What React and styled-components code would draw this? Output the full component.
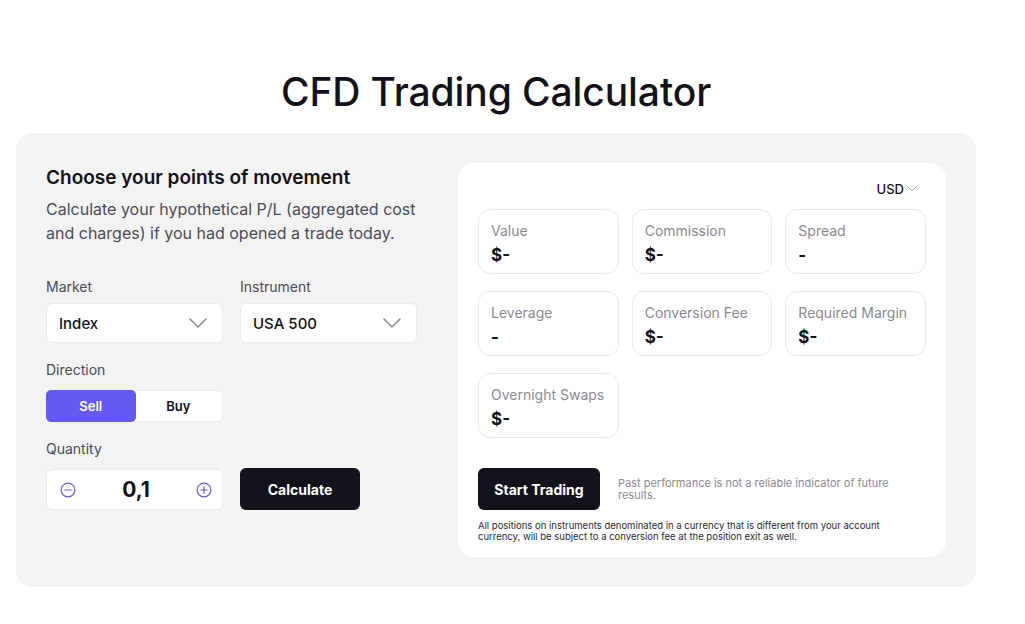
import React from 'react';
import styled, { createGlobalStyle } from 'styled-components';

const GlobalStyle = createGlobalStyle`
  body {
    margin: 0;
    background: #fff;
    font-family: Inter, "Liberation Sans", sans-serif;
    color: #12121a;
  }
`;

const Page = styled.div`
  padding: 70px 49px 0 16px;
  display: flex;
  flex-direction: column;
`;

const Title = styled.h1`
  margin: 0 0 19px;
  text-align: center;
  font-size: 39px;
  font-weight: 500;
  line-height: 44px;
  letter-spacing: -0.1px;
`;

const Card = styled.div`
  background: #f3f3f4;
  border-radius: 16px;
  padding: 30px;
  display: flex;
  gap: 40px;
  height: 454px;
  box-sizing: border-box;
`;

const LeftCol = styled.div`
  width: 372px;
  display: flex;
  flex-direction: column;
`;

const Heading = styled.h2`
  margin: 2px 0 6px;
  font-size: 19px;
  font-weight: 600;
  line-height: 26px;
`;

const Desc = styled.p`
  margin: 0 0 33px;
  font-size: 16px;
  line-height: 24px;
  color: #4b4b57;
`;

const Row = styled.div`
  display: flex;
  gap: 17px;
  align-items: ${p => p.$align || 'stretch'};
`;

const Field = styled.div`
  display: flex;
  flex-direction: column;
  gap: ${p => p.$gap || 7}px;
  width: 177px;
  margin-bottom: ${p => p.$mb || 0}px;
`;

const Label = styled.div`
  font-size: 14px;
  line-height: 18px;
  color: #4b4b57;
`;

const Select = styled.div`
  height: 40px;
  box-sizing: border-box;
  background: #fff;
  border: 1px solid #e8e8f0;
  border-radius: 6px;
  display: flex;
  align-items: center;
  justify-content: space-between;
  padding: 0 14px 0 12px;
  font-size: 15px;
  font-weight: 500;
`;

const Toggle = styled.div`
  height: 32px;
  box-sizing: border-box;
  background: #fff;
  border: 1px solid #e8e8f0;
  border-radius: 6px;
  display: flex;
`;

const ToggleBtn = styled.div`
  flex: 1;
  display: flex;
  align-items: center;
  justify-content: center;
  border-radius: 5px;
  font-size: 13px;
  font-weight: 600;
  background: ${p => (p.$active ? '#6459f3' : 'transparent')};
  color: ${p => (p.$active ? '#fff' : '#12121a')};
  margin: -1px;
`;

const Stepper = styled.div`
  height: 41px;
  box-sizing: border-box;
  background: #fff;
  border: 1px solid #e8e8f0;
  border-radius: 6px;
  display: flex;
  align-items: center;
  justify-content: space-between;
  padding: 0 10px 0 13px;
  font-size: 21px;
  font-weight: 700;
`;

const DarkButton = styled.button`
  height: 42px;
  width: ${p => p.$w}px;
  border: 0;
  border-radius: 6px;
  background: #12121a;
  color: #fff;
  font-family: inherit;
  font-size: 14px;
  font-weight: 700;
  flex-shrink: 0;
`;

const Panel = styled.div`
  flex: 1;
  background: #fff;
  border-radius: 16px;
  padding: 18px 20px 13px 20px;
  display: flex;
  flex-direction: column;
`;

const Currency = styled.div`
  align-self: flex-end;
  margin-right: 9px;
  display: flex;
  align-items: center;
  gap: 3px;
  font-size: 13px;
  font-weight: 500;
  line-height: 16px;
  margin-bottom: 12px;
`;

const Grid = styled.div`
  display: grid;
  grid-template-columns: repeat(3, 1fr);
  column-gap: 13px;
  row-gap: 17px;
`;

const Stat = styled.div`
  height: 65px;
  box-sizing: border-box;
  border: 1px solid #e8e8f0;
  border-radius: 12px;
  padding: 12px;
  display: flex;
  flex-direction: column;
  gap: 4px;
`;

const StatLabel = styled.div`
  font-size: 14px;
  line-height: 18px;
  color: #8a8a94;
`;

const StatValue = styled.div`
  font-size: 17px;
  font-weight: 700;
  line-height: 22px;
`;

const Actions = styled.div`
  display: flex;
  align-items: center;
  gap: 18px;
  margin-top: 30px;
`;

const Note = styled.div`
  font-size: 11px;
  line-height: 12px;
  color: #8a8a94;
  width: 300px;
`;

const Footnote = styled.div`
  margin-top: 10px;
  max-width: 410px;
  font-size: 9.5px;
  line-height: 11px;
  color: #2a2a36;
`;

const Chevron = ({ size = 20, color = '#8a8a94' }) => (
  <svg width={size} height={size * 0.6} viewBox="0 0 20 12" fill="none">
    <path d="M2 2l8 8 8-8" stroke={color} strokeWidth="1.6" strokeLinecap="round" strokeLinejoin="round" />
  </svg>
);

const CircleIcon = ({ plus }) => (
  <svg width="16" height="16" viewBox="0 0 16 16" fill="none">
    <circle cx="8" cy="8" r="6.8" stroke="#6459f3" strokeWidth="1.2" />
    <path d="M4.8 8h6.4" stroke="#6459f3" strokeWidth="1.2" strokeLinecap="round" />
    {plus && <path d="M8 4.8v6.4" stroke="#6459f3" strokeWidth="1.2" strokeLinecap="round" />}
  </svg>
);

const stats = [
  { label: 'Value', value: '$-' },
  { label: 'Commission', value: '$-' },
  { label: 'Spread', value: '-' },
  { label: 'Leverage', value: '-' },
  { label: 'Conversion Fee', value: '$-' },
  { label: 'Required Margin', value: '$-' },
  { label: 'Overnight Swaps', value: '$-' }
];

export default function App() {
  return (
    <Page>
      <GlobalStyle />
      <Title>CFD Trading Calculator</Title>
      <Card>
        <LeftCol>
          <Heading>Choose your points of movement</Heading>
          <Desc>
            Calculate your hypothetical P/L (aggregated cost and charges) if you had opened a trade today.
          </Desc>
          <Row>
            <Field $mb={18}>
              <Label>Market</Label>
              <Select>
                Index
                <Chevron />
              </Select>
            </Field>
            <Field $mb={18}>
              <Label>Instrument</Label>
              <Select>
                USA 500
                <Chevron />
              </Select>
            </Field>
          </Row>
          <Field $mb={18} $gap={11}>
            <Label>Direction</Label>
            <Toggle>
              <ToggleBtn $active>Sell</ToggleBtn>
              <ToggleBtn>Buy</ToggleBtn>
            </Toggle>
          </Field>
          <Row $align="flex-end">
            <Field $gap={11}>
              <Label>Quantity</Label>
              <Stepper>
                <CircleIcon />
                0,1
                <CircleIcon plus />
              </Stepper>
            </Field>
            <DarkButton $w={120}>Calculate</DarkButton>
          </Row>
        </LeftCol>
        <Panel>
          <Currency>
            USD
            <Chevron size={10} />
          </Currency>
          <Grid>
            {stats.map(s => (
              <Stat key={s.label}>
                <StatLabel>{s.label}</StatLabel>
                <StatValue>{s.value}</StatValue>
              </Stat>
            ))}
          </Grid>
          <Actions>
            <DarkButton $w={122}>Start Trading</DarkButton>
            <Note>Past performance is not a reliable indicator of future results.</Note>
          </Actions>
          <Footnote>
            All positions on instruments denominated in a currency that is different from your account
            currency, will be subject to a conversion fee at the position exit as well.
          </Footnote>
        </Panel>
      </Card>
    </Page>
  );
}
